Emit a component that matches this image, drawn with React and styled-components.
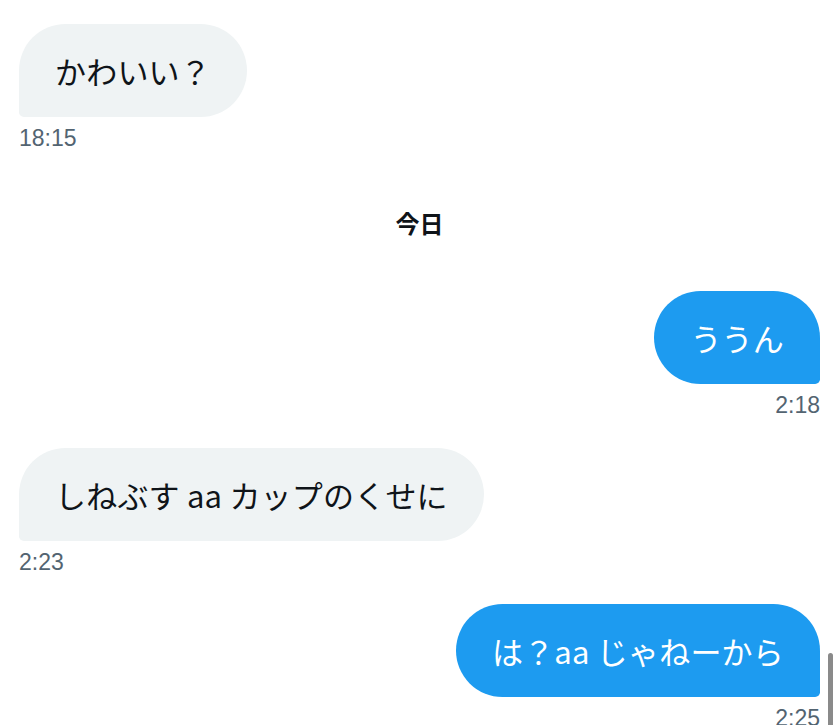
import React from "react";
import styled, { createGlobalStyle } from "styled-components";

const GlobalStyle = createGlobalStyle`
  html, body {
    margin: 0;
    padding: 0;
    background: #ffffff;
    overflow: hidden;
  }
  body {
    font-family: "Noto Sans CJK JP", "Noto Sans", sans-serif;
    color: #0f1419;
  }
`;

const Page = styled.div`
  display: flex;
  flex-direction: column;
  padding: 24px 20px 0 19px;
  gap: 29.5px;
`;

const Message = styled.div`
  display: flex;
  flex-direction: column;
  align-items: ${(p) => (p.$sent ? "flex-end" : "flex-start")};
`;

const Bubble = styled.div`
  box-sizing: border-box;
  height: 93px;
  padding: 24px 36px;
  font-size: 31px;
  line-height: 45px;
  letter-spacing: 0.2px;
  white-space: pre;
  background: ${(p) => (p.$sent ? "#1d9bf0" : "#eff3f4")};
  color: ${(p) => (p.$sent ? "#ffffff" : "#0f1419")};
  border-radius: ${(p) => (p.$sent ? "48px 48px 5px 48px" : "48px 48px 48px 5px")};
`;

const Time = styled.div`
  margin-top: 8px;
  font-family: "Liberation Sans", "Noto Sans CJK JP", sans-serif;
  font-size: 23px;
  line-height: 26px;
  color: #536471;
`;

const DateDivider = styled.div`
  display: flex;
  justify-content: center;
  padding: 27px 0 24px;
  font-size: 24px;
  line-height: 30px;
  font-weight: 700;
  color: #0f1419;
`;

const ScrollThumb = styled.div`
  position: fixed;
  right: 7px;
  top: 653px;
  width: 5px;
  height: 90px;
  border-radius: 3px;
  background: #8a8a8a;
`;

const messages = [
  { text: "かわいい？", time: "18:15", sent: false },
  { divider: "今日" },
  { text: "ううん", time: "2:18", sent: true },
  { text: "しねぶす aa カップのくせに", time: "2:23", sent: false },
  { text: "は？aa じゃねーから", time: "2:25", sent: true },
];

export default function App() {
  return (
    <>
      <GlobalStyle />
      <Page>
        {messages.map((m, i) =>
          m.divider ? (
            <DateDivider key={i}>{m.divider}</DateDivider>
          ) : (
            <Message key={i} $sent={m.sent}>
              <Bubble $sent={m.sent}>{m.text}</Bubble>
              <Time>{m.time}</Time>
            </Message>
          )
        )}
      </Page>
      <ScrollThumb />
    </>
  );
}
